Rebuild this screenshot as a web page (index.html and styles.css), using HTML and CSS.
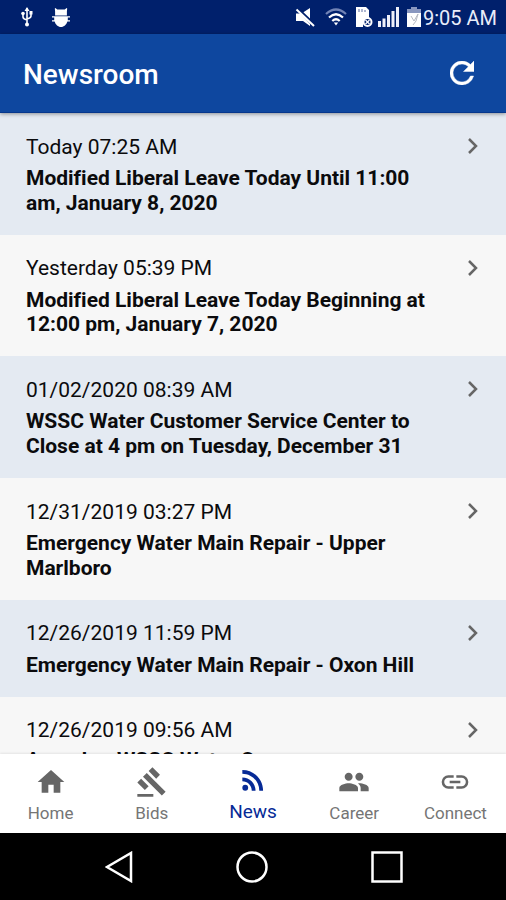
FILE: index.html
```html
<!DOCTYPE html>
<html lang="en">
<head>
  <meta charset="UTF-8">
  <meta name="viewport" content="width=device-width, initial-scale=1">
  <title>Newsroom</title>
  <link rel="stylesheet" href="styles.css">
</head>
<body>

  <!-- Status bar -->
  <div class="status">
    <div class="status-left">
      <svg class="usb" viewBox="0 0 12 20" width="12" height="20"><path d="M6 1v16M2 7v3q0 2 4 3M10 6v3q0 2-4 3" fill="none" stroke="#fff" stroke-width="1.6"/><path d="M3.500 4L6 0l2.500 4zM8.500 4h3v3.500h-3z" fill="#fff"/><circle cx="2" cy="6.500" r="1.800" fill="#fff"/><circle cx="6" cy="17.500" r="2" fill="#fff"/></svg>
      <svg class="debug" viewBox="0 0 18 19" width="18" height="19"><path d="M3.300 0l2 1.500h7.400l2-1.500.5.500-.3 3V7.500H3.100v-4l-.3-3zM0 8.300h18v1.200h-2.200V12.300H18v1.200h-2.600C14.500 16.500 12 19 9 19s-5.500-2.500-6.400-5.500H0v-1.200h2.200V9.500H0z" fill="#fff"/></svg>
    </div>
    <div class="status-right">
      <svg viewBox="0 0 20 19" width="20" height="19"><path d="M1 5.500h4.500L15 16v2l-7-5H1zM8 4.500L15 0v12z" fill="#fff"/><path d="M2.500 0L20 16.500" stroke="#00206c" stroke-width="2"/><path d="M1.500 1.500L19 18" stroke="#fff" stroke-width="2"/></svg>
      <svg class="wifi" viewBox="0 0 22 18" width="22" height="18"><g fill="none"><path d="M1 6Q11-3 21 6" stroke="#7183b5" stroke-width="2.200"/><path d="M4 9.500Q11 3 18 9.500M7.300 13Q11 9.500 14.700 13" stroke="#fff" stroke-width="2.200"/></g><path d="M8.800 14.500h4.400L11 17.500z" fill="#fff"/></svg>
      <svg class="sim" viewBox="0 0 17 20" width="17" height="20"><path d="M0 0h10l3 3v12H7v5H0z" fill="#fff"/><path d="M3 2v3M6 2v3M9 3v2" stroke="#8390b8" stroke-width="1.300"/><circle cx="11.500" cy="15" r="4" fill="#00206c" stroke="#fff" stroke-width="2"/><path d="M9.500 13l4 4m0-4l-4 4" stroke="#fff" stroke-width="1.300"/></svg>
      <svg class="signal" viewBox="0 0 21 20" width="21" height="20"><path d="M0 14h3v6H0zM4.500 11.500h3V20h-3zM9 8h3v12H9zM13.500 4h3v16h-3zM18 0h3v20h-3z" fill="#eef0fa"/></svg>
      <svg class="battery" viewBox="0 0 14 20" width="14" height="20"><path d="M4 0h6v2h4v5H0V2h4z" fill="#8997bf"/><path d="M0 6h14v14H0z" fill="#fff"/><path d="M4 9l3 5 4-7-2 7-3 4" fill="none" stroke="#b6bac2"/></svg>
      <span class="clock">9:05 AM</span>
    </div>
  </div>

  <!-- App bar -->
  <header class="appbar">
    <h1>Newsroom</h1>
    <svg viewBox="4 4 16 16" width="24" height="24"><path fill="#fff" stroke="#fff" stroke-width=".3" d="M17.650 6.350A7.958 7.958 0 0 0 12 4a8 8 0 1 0 7.730 10h-2.080A6 6 0 1 1 12 6c1.660 0 3.140.69 4.220 1.780L13 11h7V4z"/></svg>
  </header>

  <!-- News list -->
  <main class="news">
    <article class="item">
      <div class="date">Today 07:25 AM</div>
      <div class="title">Modified Liberal Leave Today Until 11:00<br>am, January 8, 2020</div>
      <svg class="chevron" viewBox="0 0 10 16" width="10" height="16"><path d="M1 1l7 7-7 7"/></svg>
    </article>
    <article class="item">
      <div class="date">Yesterday 05:39 PM</div>
      <div class="title">Modified Liberal Leave Today Beginning at<br>12:00 pm, January 7, 2020</div>
      <svg class="chevron" viewBox="0 0 10 16" width="10" height="16"><path d="M1 1l7 7-7 7"/></svg>
    </article>
    <article class="item">
      <div class="date">01/02/2020 08:39 AM</div>
      <div class="title">WSSC Water Customer Service Center to<br>Close at 4 pm on Tuesday, December 31</div>
      <svg class="chevron" viewBox="0 0 10 16" width="10" height="16"><path d="M1 1l7 7-7 7"/></svg>
    </article>
    <article class="item">
      <div class="date">12/31/2019 03:27 PM</div>
      <div class="title">Emergency Water Main Repair - Upper<br>Marlboro</div>
      <svg class="chevron" viewBox="0 0 10 16" width="10" height="16"><path d="M1 1l7 7-7 7"/></svg>
    </article>
    <article class="item">
      <div class="date">12/26/2019 11:59 PM</div>
      <div class="title">Emergency Water Main Repair - Oxon Hill</div>
      <svg class="chevron" viewBox="0 0 10 16" width="10" height="16"><path d="M1 1l7 7-7 7"/></svg>
    </article>
    <article class="item last">
      <div class="date">12/26/2019 09:56 AM</div>
      <div class="title">Agenda - WSSC Water C</div>
      <svg class="chevron" viewBox="0 0 10 16" width="10" height="16"><path d="M1 1l7 7-7 7"/></svg>
    </article>
  </main>

  <!-- Tabs -->
  <nav class="tabs">
    <a class="tab">
      <svg viewBox="0 0 24 24" width="32" height="32"><path d="M10 20v-6h4v6h5v-8h3L12 3 2 12h3v8z"/></svg>
      <span>Home</span>
    </a>
    <a class="tab">
      <svg viewBox="0 0 24 24" width="32" height="32"><path d="M1 21h12v2H1zM5.245 8.070l2.830-2.827 14.140 14.142-2.828 2.828zM12.317 1l5.657 5.656-2.830 2.830-5.654-5.660zM3.825 9.485l5.657 5.657-2.828 2.828-5.657-5.657z"/></svg>
      <span>Bids</span>
    </a>
    <a class="tab active">
      <svg viewBox="0 0 24 24" width="32" height="32"><circle cx="6.180" cy="17.820" r="2.180"/><path d="M4 4.440v2.830c7.030 0 12.730 5.700 12.730 12.730h2.830c0-8.590-6.970-15.560-15.560-15.560zm0 5.660v2.830c3.900 0 7.070 3.170 7.070 7.070h2.830c0-5.470-4.430-9.900-9.900-9.900z"/></svg>
      <span>News</span>
    </a>
    <a class="tab">
      <svg viewBox="0 0 24 24" width="34" height="32"><path d="M16 11c1.660 0 2.990-1.340 2.990-3S17.660 5 16 5s-3 1.340-3 3 1.340 3 3 3zm-8 0c1.660 0 2.990-1.340 2.990-3S9.660 5 8 5 5 6.340 5 8s1.340 3 3 3zm0 2c-2.330 0-7 1.170-7 3.500V19h14v-2.500c0-2.330-4.670-3.500-7-3.500zm8 0c-.29 0-.62.020-.97.050 1.160.84 1.970 1.970 1.970 3.450V19h6v-2.500c0-2.330-4.670-3.500-7-3.500z"/></svg>
      <span>Career</span>
    </a>
    <a class="tab">
      <svg viewBox="0 0 24 24" width="34" height="34"><path d="M3.900 12c0-1.710 1.390-3.100 3.100-3.100h4V7H7a5 5 0 0 0 0 10h4v-1.900H7A3.100 3.100 0 0 1 3.900 12zM8 13h8v-2H8zm9-6h-4v1.900h4a3.100 3.100 0 0 1 0 6.200h-4V17h4a5 5 0 0 0 0-10z"/></svg>
      <span>Connect</span>
    </a>
  </nav>

  <!-- System buttons -->
  <div class="system">
    <svg viewBox="0 0 28 32" width="28" height="32"><path d="M26 2v28L2 16z"/></svg>
    <svg viewBox="0 0 32 32" width="32" height="32"><circle cx="16" cy="16" r="14.500"/></svg>
    <svg viewBox="0 0 32 32" width="32" height="32"><path d="M1.500 1.500h29v29h-29z"/></svg>
  </div>

</body>
</html>
```

FILE: styles.css
```css
* {
  box-sizing: border-box;
}

body {
  margin: 0;
  height: 900px;
  display: flex;
  flex-direction: column;
  overflow: hidden;
  background: #f7f7f7;
  font-family: Roboto, sans-serif;
}

svg {
  display: block;
  flex: none;
}

.status {
  height: 34px;
  flex: none;
  display: flex;
  justify-content: space-between;
  padding: 0 10px 0 21px;
  background: #00206c;
  color: #e9edfa;
}

.status-left,
.status-right {
  display: flex;
  align-items: center;
}

.debug {
  margin-left: 19px;
}

.wifi {
  margin-left: 10px;
}

.sim {
  margin-left: 9px;
}

.signal {
  margin-left: 5px;
}

.battery {
  margin-left: 8px;
}

.clock {
  width: 73px;
  margin: 2px 0 0 2px;
  font-size: 20px;
  white-space: nowrap;
}

.appbar {
  height: 79px;
  flex: none;
  display: flex;
  align-items: center;
  justify-content: space-between;
  padding: 0 32px 0 23px;
  background: #0e479f;
  border-bottom: 1px solid #06378c;
  box-shadow: 0 1px 4px rgba(0, 0, 0, 0.4);
  color: #fff;
  z-index: 1;
}

.appbar h1 {
  margin: 3px 0 0;
  font-size: 28px;
  font-weight: 500;
}

.news {
  flex: 1;
  min-height: 0;
  overflow: hidden;
}

.item {
  position: relative;
  padding: 20px 26px 19.500px;
  color: #0b0b0d;
}

.item:nth-child(odd) {
  background: #e4eaf2;
}

.date {
  margin-bottom: 6.500px;
  padding-top: 0.500px;
  font-size: 21px;
  line-height: 26px;
}

.last .date {
  margin-bottom: 4.500px;
}

.title {
  font-size: 21px;
  font-weight: 700;
  line-height: 24.600px;
  letter-spacing: -0.010px;
  white-space: nowrap;
}

.chevron {
  position: absolute;
  top: 25px;
  right: 28px;
  fill: none;
  stroke: #666;
  stroke-width: 2.500;
}

.tabs {
  height: 79px;
  flex: none;
  display: flex;
  background: #fff;
  box-shadow: 0 -1px 2px rgba(0, 0, 0, 0.08);
  z-index: 1;
}

.tab {
  flex: 1;
  display: flex;
  flex-direction: column;
  align-items: center;
  color: #757575;
  fill: #666;
  font-size: 17px;
}

.tab svg {
  height: 32px;
  margin-top: 12px;
}

.tab span {
  line-height: 20px;
  margin-top: 5px;
}

.active {
  color: #062a96;
  fill: #062a96;
  font-size: 19px;
}

.active svg {
  margin-top: 10px;
}

.active span {
  margin-top: 6px;
}

.system {
  height: 67px;
  flex: none;
  display: flex;
  align-items: center;
  justify-content: center;
  gap: 103px;
  padding-left: 2px;
  background: #000;
}

.system svg {
  fill: none;
  stroke: #fff;
  stroke-width: 2.500;
}
```
